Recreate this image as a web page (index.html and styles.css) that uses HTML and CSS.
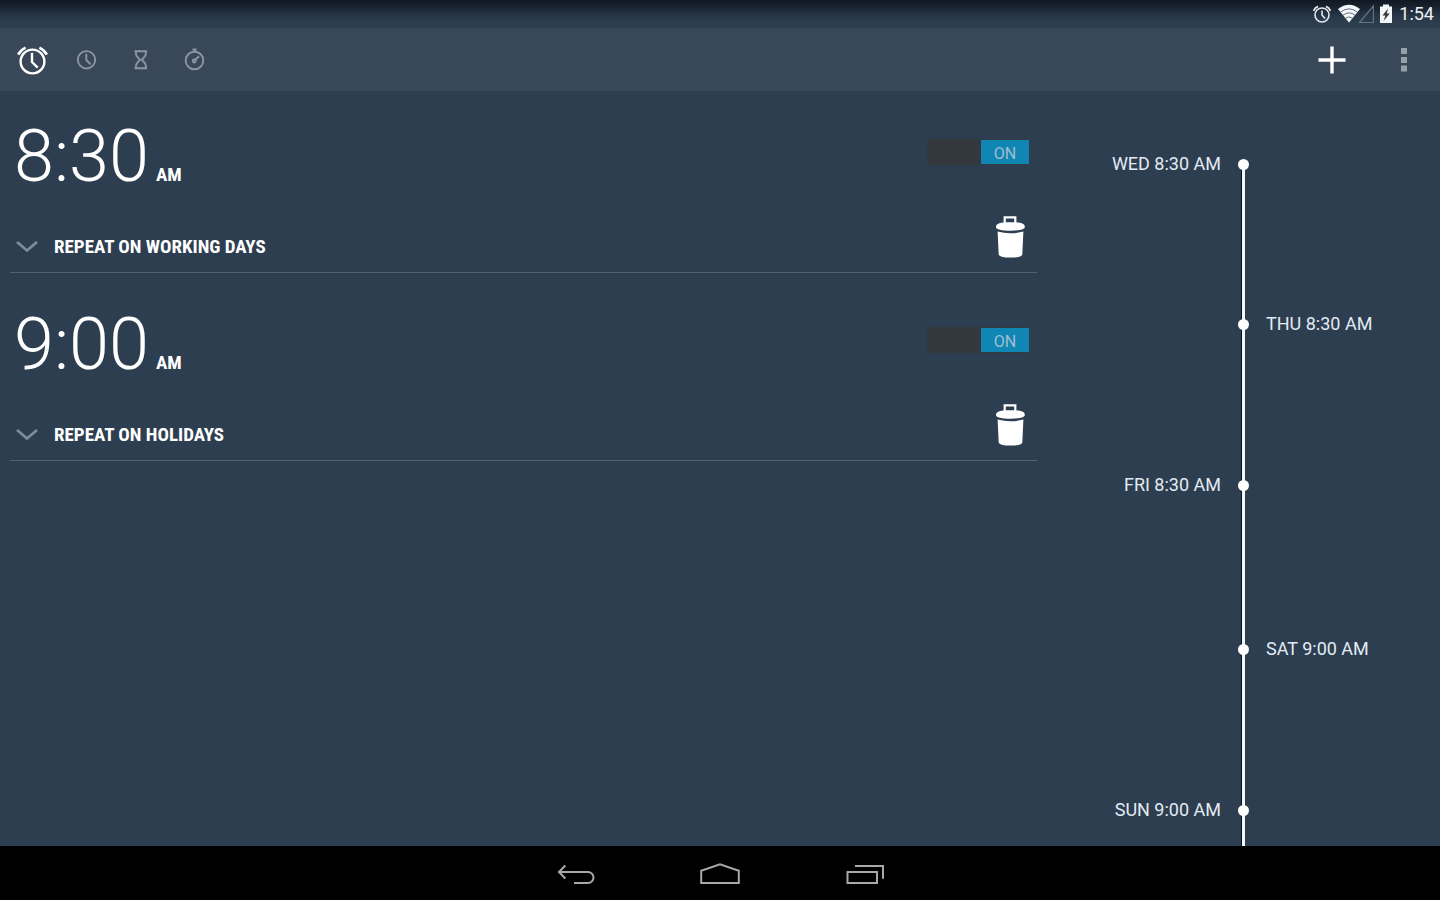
FILE: index.html
```html
<!DOCTYPE html>
<html lang="en">
<head>
<meta charset="utf-8">
<meta name="viewport" content="width=device-width, initial-scale=1">
<title>Alarms</title>
<link rel="stylesheet" href="styles.css">
</head>
<body>
<div class="screen">
  <div class="status-bar">
    <svg class="status-alarm" width="20" height="20" viewBox="0 0 20 20" fill="none" stroke="#e4e9ed" stroke-width="1.6">
      <circle cx="10" cy="11" r="7"/><path d="M10 6.500V11l3 3.500"/><path d="M1.600 6.800Q2.800 3.800 6 2.400M18.400 6.800Q17.200 3.800 14 2.400" stroke-width="1.800"/>
    </svg>
    <svg class="status-wifi" width="22" height="20" viewBox="0 0 22 20">
      <path d="M0 5Q11-3.500 22 5L11 18.500Z" fill="#f4f7f9"/>
      <path d="M2.500 8.200Q11 1.500 19.500 8.200M5 11.200Q11 6.500 17 11.200M7.500 14.200Q11 11.500 14.500 14.200" fill="none" stroke="#55626f" stroke-width="0.900"/>
    </svg>
    <svg class="status-signal" width="16" height="20" viewBox="0 0 16 20" fill="none" stroke="#647280" stroke-width="1.200"><path d="M1.500 18.500H15.400V2Z"/></svg>
    <svg class="status-battery" width="12" height="20" viewBox="0 0 12 20">
      <path d="M3 .500h6v2h3V19H0V2.500h3Z" fill="#f4f7f9"/><path d="M8 4.500 2.500 11.500H5.500L3.500 17 9.800 9.500H6.800Z" fill="#33383d"/>
    </svg>
    <span class="status-time">1:54</span>
  </div>

  <header class="toolbar">
    <nav class="tabs" aria-label="Sections">
      <button class="tab tab-active" type="button" aria-label="Alarms">
        <svg width="54" height="63" viewBox="0 0 54 63"><circle cx="27.500" cy="33.500" r="11.900"/><path d="M27 24.800V34l5.700 5.600"/><path d="M13.200 26.600Q15.500 22 20.600 19.600M41.800 26.600Q39.500 22 34.400 19.600" stroke-width="2.600"/></svg>
      </button>
      <button class="tab" type="button" aria-label="Clock">
        <svg width="54" height="63" viewBox="0 0 54 63"><circle cx="27.500" cy="31.800" r="8.700"/><path d="M27.300 25.700V32l4.300 4.300"/></svg>
      </button>
      <button class="tab" type="button" aria-label="Timer">
        <svg width="54" height="63" viewBox="0 0 54 63"><path d="M21.500 23.200H34M21.500 40.300H34M23 23.200V26C23 29 26.400 29.800 26.400 31.800S23 34.500 23 37.500V40.300M32.800 23.200V26C32.800 29 29.400 29.800 29.400 31.800S32.800 34.500 32.800 37.500V40.300M26.400 31.800H29.400"/></svg>
      </button>
      <button class="tab" type="button" aria-label="Stopwatch">
        <svg width="54" height="63" viewBox="0 0 54 63"><circle cx="27.500" cy="32.500" r="8.800"/><path d="M25.500 21.500H29.700M27.600 21.500V24M28.400 31.800 32 28.300"/><circle cx="27.200" cy="33" r="1.500"/></svg>
      </button>
    </nav>
    <div class="actions">
      <button class="action" type="button" aria-label="Add alarm">
        <svg width="28" height="28" viewBox="0 0 28 28" fill="none" stroke="#fff" stroke-width="3.400"><path d="M14 .5V27.500M.5 14H27.500"/></svg>
      </button>
      <button class="action" type="button" aria-label="More options">
        <svg width="6" height="24" viewBox="0 0 6 24" fill="#96a0a9"><path d="M0 0h6v6H0ZM0 9h6v6H0ZM0 17.500h6v6H0Z"/></svg>
      </button>
    </div>
  </header>

  <main class="content">
    <section class="alarms" aria-label="Alarms">
      <article class="alarm">
        <div class="alarm-top">
          <button class="alarm-time" type="button"><span class="digits">8:30</span><span class="period">AM</span></button>
          <label class="switch"><input class="switch-input" type="checkbox" role="switch" checked aria-label="8:30 alarm"><span class="switch-thumb">ON</span></label>
        </div>
        <div class="alarm-bottom">
          <button class="repeat" type="button">
            <svg width="22" height="12" viewBox="0 0 22 12" fill="none" stroke="#7f8b98" stroke-width="2.800"><path d="M1 1 11 9.500 21 1"/></svg>
            <span>REPEAT ON WORKING DAYS</span>
          </button>
          <button class="delete" type="button" aria-label="Delete 8:30 alarm">
            <svg width="29" height="42" viewBox="0 0 29 42" fill="#fff"><path d="M8.700 7V1.400H19.300V7" fill="none" stroke="#fff" stroke-width="2.200"/><path d="M0 11C0 7.500 4 6.200 14.400 6.200S28.800 7.500 28.800 11C28.800 13.600 23 14.700 14.400 14.700S0 13.600 0 11Z"/><path d="M1.600 15.600Q14.400 19 27.400 15.600L26.300 38.400Q25.700 41.500 14.400 41.500T2.700 38.400Z"/></svg>
          </button>
        </div>
      </article>
      <article class="alarm">
        <div class="alarm-top">
          <button class="alarm-time" type="button"><span class="digits">9:00</span><span class="period">AM</span></button>
          <label class="switch"><input class="switch-input" type="checkbox" role="switch" checked aria-label="9:00 alarm"><span class="switch-thumb">ON</span></label>
        </div>
        <div class="alarm-bottom">
          <button class="repeat" type="button">
            <svg width="22" height="12" viewBox="0 0 22 12" fill="none" stroke="#7f8b98" stroke-width="2.800"><path d="M1 1 11 9.500 21 1"/></svg>
            <span>REPEAT ON HOLIDAYS</span>
          </button>
          <button class="delete" type="button" aria-label="Delete 9:00 alarm">
            <svg width="29" height="42" viewBox="0 0 29 42" fill="#fff"><path d="M8.700 7V1.400H19.300V7" fill="none" stroke="#fff" stroke-width="2.200"/><path d="M0 11C0 7.500 4 6.200 14.400 6.200S28.800 7.500 28.800 11C28.800 13.600 23 14.700 14.400 14.700S0 13.600 0 11Z"/><path d="M1.600 15.600Q14.400 19 27.400 15.600L26.300 38.400Q25.700 41.500 14.400 41.500T2.700 38.400Z"/></svg>
          </button>
        </div>
      </article>
    </section>

    <!-- Each stop's height is the time until the next alarm. -->
    <ol class="timeline" aria-label="Upcoming alarms">
      <li class="stop stop-left" style="height:160px"><span class="stop-label">WED 8:30 AM</span><span class="stop-mark"></span></li>
      <li class="stop stop-right" style="height:161px"><span class="stop-mark"></span><span class="stop-label">THU 8:30 AM</span></li>
      <li class="stop stop-left" style="height:164px"><span class="stop-label">FRI 8:30 AM</span><span class="stop-mark"></span></li>
      <li class="stop stop-right" style="height:161px"><span class="stop-mark"></span><span class="stop-label">SAT 9:00 AM</span></li>
      <li class="stop stop-left stop-last"><span class="stop-label">SUN 9:00 AM</span><span class="stop-mark"></span></li>
    </ol>
  </main>

  <nav class="system-nav" aria-label="System">
    <button class="system-button" type="button" aria-label="Back"><svg width="40" height="24" viewBox="0 0 40 24"><path d="M9.300 4.500 3 11l6.300 6.500M3 11H32a5.500 5.500 0 0 1 0 11H18"/></svg></button>
    <button class="system-button" type="button" aria-label="Home"><svg width="40" height="24" viewBox="0 0 40 24"><path d="M1.200 22V9.800L20 3.400 38.800 9.800V22Z"/></svg></button>
    <button class="system-button" type="button" aria-label="Recent apps"><svg width="40" height="24" viewBox="0 0 40 24"><path d="M11 5H39V17.700M3.500 11H33V22H3.500Z"/></svg></button>
  </nav>
</div>
</body>
</html>
```

FILE: styles.css
```css
* {
  box-sizing: border-box;
}

body {
  margin: 0;
  background: #2d3e50;
  color: #fff;
  font-family: Roboto, "Liberation Sans", sans-serif;
}

button {
  margin: 0;
  padding: 0;
  border: 0;
  background: none;
  color: inherit;
  font: inherit;
  cursor: pointer;
}

svg {
  display: block;
}

.screen {
  display: flex;
  flex-direction: column;
  height: 100vh;
}

.status-bar {
  display: flex;
  align-items: center;
  justify-content: flex-end;
  height: 28px;
  padding-right: 6px;
  background: linear-gradient(#101721, #1a2532 8px, #283747 16px, #2d3e4f 24px);
}

.status-wifi {
  margin-left: 6px;
}

.status-battery {
  margin: 0 7px 0 6px;
}

.status-signal {
  margin-left: -2px;
}

.status-time {
  font-size: 18px;
  line-height: 28px;
  color: #eef2f5;
}

.toolbar {
  display: flex;
  justify-content: space-between;
  height: 63px;
  padding-left: 5px;
  background: #384858;
}

.tabs,
.actions {
  display: flex;
}

.tab svg {
  fill: none;
  stroke: #8a96a2;
  stroke-width: 1.9;
}

.tab-active svg {
  stroke: #fff;
  stroke-width: 2.4;
}

.action {
  display: flex;
  align-items: center;
  justify-content: center;
  width: 72px;
}

.content {
  display: grid;
  grid-template-columns: minmax(0, 1fr) 393px;
  flex: 1;
  min-height: 0;
}

.alarms {
  display: flex;
  flex-direction: column;
  gap: 6px;
  padding: 0 10px;
}

.alarm {
  padding-top: 24px;
  border-bottom: 1px solid #526171;
}

.alarm-top,
.alarm-bottom {
  display: flex;
  justify-content: space-between;
}

.alarm-top {
  align-items: flex-start;
  padding: 0 8px 0 4px;
}

.alarm-time {
  display: flex;
  align-items: baseline;
  gap: 7px;
}

.digits {
  font-size: 72px;
  font-weight: 300;
  line-height: 84px;
}

.period,
.repeat {
  font-family: "Roboto Condensed", "Liberation Sans Narrow", Roboto, sans-serif;
  font-size: 19px;
  font-weight: 700;
  line-height: 22px;
}

.switch {
  display: flex;
  justify-content: flex-end;
  width: 102px;
  height: 26px;
  margin-top: 24px;
  padding: 1px 0;
  background: #33383f;
  cursor: pointer;
}

.switch-input {
  width: 0;
  height: 0;
  margin: 0;
  appearance: none;
}

.switch-thumb {
  width: 48px;
  padding-top: 1px;
  background: #0f86b4;
  color: #a3bed0;
  font-size: 16px;
  line-height: 26px;
  text-align: center;
}

.alarm-bottom {
  align-items: flex-end;
  padding: 17px 12px 14px 6px;
}

.repeat {
  display: flex;
  align-items: center;
  gap: 16px;
}

.timeline {
  display: flex;
  flex-direction: column;
  margin: 0;
  padding: 63px 0 0;
  overflow: hidden;
  list-style: none;
}

.stop {
  display: grid;
  grid-template-columns: minmax(0, 1fr) 11px minmax(0, 1fr);
  column-gap: 17px;
  flex-shrink: 0;
}

.stop-last {
  flex: 1;
}

.stop-label {
  color: #e2ebf3;
  font-size: 18px;
  line-height: 20px;
}

.stop-left .stop-label {
  text-align: right;
}

.stop-mark {
  position: relative;
  grid-column: 2;
}

.stop-mark::before {
  content: "";
  position: absolute;
  top: 10px;
  bottom: -10px;
  left: 4px;
  width: 3px;
  background: #f4f8fb;
  box-shadow: -1px 0 #0b121b;
}

.stop-mark::after {
  content: "";
  position: absolute;
  top: 5px;
  left: 0;
  width: 11px;
  height: 11px;
  border-radius: 50%;
  background: #fff;
}

.system-nav {
  display: flex;
  justify-content: center;
  height: 54px;
  background: #000;
}

.system-button {
  display: flex;
  align-items: center;
  justify-content: center;
  width: 144px;
}

.system-button svg {
  fill: none;
  stroke: #a9a9a9;
  stroke-width: 2;
}
```
